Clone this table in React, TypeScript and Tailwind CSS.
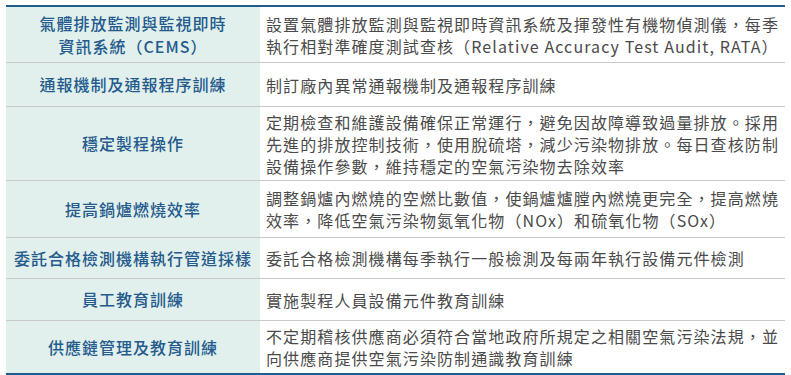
type Row = {
  label: string[];
  lines: string[];
  h: string;
};

const rows: Row[] = [
  {
    label: ["氣體排放監測與監視即時", "資訊系統（CEMS）"],
    lines: [
      "設置氣體排放監測與監視即時資訊系統及揮發性有機物偵測儀，每季",
      "執行相對準確度測試查核（Relative Accuracy Test Audit, RATA）",
    ],
    h: "h-[55px]",
  },
  {
    label: ["通報機制及通報程序訓練"],
    lines: ["制訂廠內異常通報機制及通報程序訓練"],
    h: "h-[44px]",
  },
  {
    label: ["穩定製程操作"],
    lines: [
      "定期檢查和維護設備確保正常運行，避免因故障導致過量排放。採用",
      "先進的排放控制技術，使用脫硫塔，減少污染物排放。每日查核防制",
      "設備操作參數，維持穩定的空氣污染物去除效率",
    ],
    h: "h-[74px]",
  },
  {
    label: ["提高鍋爐燃燒效率"],
    lines: [
      "調整鍋爐內燃燒的空燃比數值，使鍋爐爐膛內燃燒更完全，提高燃燒",
      "效率，降低空氣污染物氮氧化物（NOx）和硫氧化物（SOx）",
    ],
    h: "h-[57px]",
  },
  {
    label: ["委託合格檢測機構執行管道採樣"],
    lines: ["委託合格檢測機構每季執行一般檢測及每兩年執行設備元件檢測"],
    h: "h-[41px]",
  },
  {
    label: ["員工教育訓練"],
    lines: ["實施製程人員設備元件教育訓練"],
    h: "h-[42px]",
  },
  {
    label: ["供應鏈管理及教育訓練"],
    lines: [
      "不定期稽核供應商必須符合當地政府所規定之相關空氣污染法規，並",
      "向供應商提供空氣污染防制通識教育訓練",
    ],
    h: "h-[53px]",
  },
];

export default function App() {
  return (
    <div className="w-[791px] h-[375px] bg-white pt-[5px] px-[6px] font-['Noto_Sans_CJK_TC','Noto_Sans',sans-serif]">
      <div className="w-[779px] border-t-2 border-b-2 border-[#1f5d8e]">
        {rows.map((row, i) => (
          <div
            key={i}
            className={`flex ${row.h} ${i > 0 ? "border-t border-[#c9c9c9]" : ""}`}
          >
            <div className="w-[254px] shrink-0 bg-[#e1f0ec] flex flex-col items-center justify-center text-center text-[16px] leading-[23px] tracking-[1px] font-medium text-[#245a8c]">
              {row.label.map((l, j) => (
                <span key={j} className="whitespace-nowrap">{l}</span>
              ))}
            </div>
            <div className="flex-1 flex flex-col justify-center pl-[6px] text-[16px] leading-[22px] tracking-[1.1px] text-[#4a4a4a]">
              {row.lines.map((l, j) => (
                <span key={j} className="whitespace-nowrap">{l}</span>
              ))}
            </div>
          </div>
        ))}
      </div>
    </div>
  );
}
